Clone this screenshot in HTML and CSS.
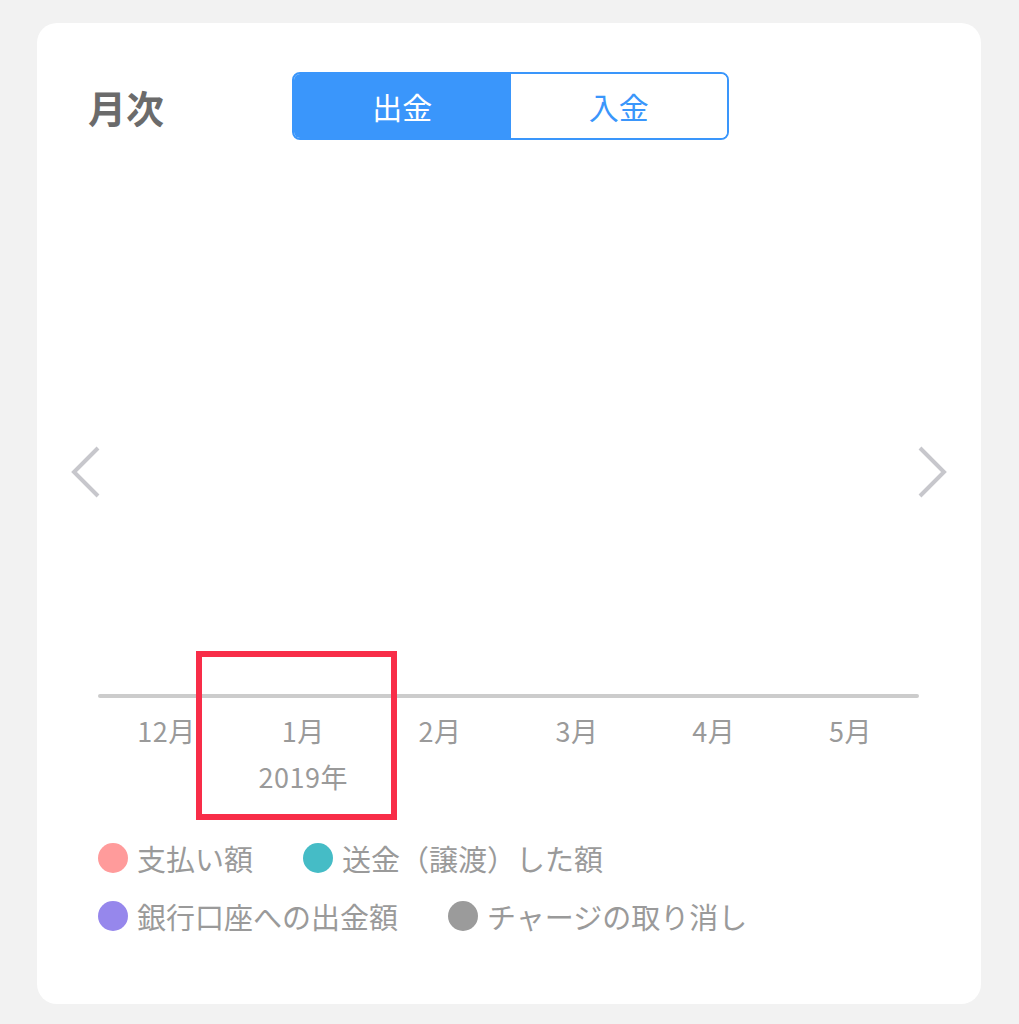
FILE: index.html
```html
<!DOCTYPE html>
<html lang="ja">
  <head>
    <meta charset="UTF-8" />
    <meta name="viewport" content="width=device-width, initial-scale=1.0" />
    <title>月次</title>
    <link rel="stylesheet" href="styles.css">
  </head>
  <body>
    <div class="card">
      <div class="header">
        <h1 class="title">月次</h1>
        <div class="segment">
          <button class="segment-btn active">出金</button>
          <button class="segment-btn">入金</button>
        </div>
      </div>

      <div class="chart">
        <button class="nav nav-prev" aria-label="前へ">
          <svg width="32" height="54" viewBox="0 0 32 54"><polyline points="28,3 4,27 28,51" fill="none" stroke="#c7c7cc" stroke-width="4" /></svg>
        </button>
        <div class="plot"></div>
        <button class="nav nav-next" aria-label="次へ">
          <svg width="32" height="54" viewBox="0 0 32 54"><polyline points="4,3 28,27 4,51" fill="none" stroke="#c7c7cc" stroke-width="4" /></svg>
        </button>
      </div>

      <div class="timeline">
        <div class="axis"></div>
        <div class="months">
          <div class="month">12月</div>
          <div class="month">1月<br />2019年</div>
          <div class="month">2月</div>
          <div class="month">3月</div>
          <div class="month">4月</div>
          <div class="month">5月</div>
        </div>
        <div class="selected"></div>
      </div>

      <ul class="legend">
        <li class="legend-item"><span class="dot pay"></span>支払い額</li>
        <li class="legend-item"><span class="dot send"></span>送金（譲渡）した額</li>
        <li class="legend-item"><span class="dot bank"></span>銀行口座への出金額</li>
        <li class="legend-item"><span class="dot cancel"></span>チャージの取り消し</li>
      </ul>
    </div>
  </body>
</html>
```

FILE: styles.css
```css
body {
  margin: 0;
  background-color: #f2f2f2;
  font-family: "Noto Sans CJK JP", "Noto Sans", sans-serif;
}

.card {
  background-color: #fff;
  width: 944px;
  height: 981px;
  margin: 23px 0 0 37px;
  border-radius: 20px;
  padding-top: 49px;
  box-sizing: border-box;
  position: relative;
}

.header {
  display: flex;
  align-items: center;
  height: 68px;
  padding-left: 51px;
}

.title {
  width: 204px;
  margin: 0;
  font-size: 38px;
  font-weight: bold;
  color: #6b6b6b;
  line-height: 1;
  padding-top: 2px;
}

.segment {
  display: flex;
  width: 437px;
  height: 68px;
  border: 2px solid #3a96fb;
  border-radius: 8px;
  box-sizing: border-box;
  overflow: hidden;
}

.segment-btn {
  flex: 1;
  border: none;
  background-color: #fff;
  color: #3a96fb;
  font-family: inherit;
  font-size: 30px;
  padding: 0;
  cursor: pointer;
}

.segment-btn.active {
  background-color: #3a96fb;
  color: #fff;
}

.chart {
  position: relative;
  height: 554px;
  padding: 0 62px 0 61px;
}

.plot {
  height: 100%;
}

.nav {
  position: absolute;
  top: 305px;
  border: none;
  background: none;
  padding: 0;
  width: 32px;
  height: 54px;
  cursor: pointer;
}

.nav svg {
  display: block;
}

.nav-prev {
  left: 33px;
}

.nav-next {
  left: 879px;
}

.timeline {
  position: relative;
  margin: 0 62px 0 61px;
}

.axis {
  height: 4px;
  background-color: #cccccc;
  border-radius: 2px;
}

.months {
  display: grid;
  grid-template-columns: repeat(6, 1fr);
  padding-top: 10px;
}

.month {
  text-align: center;
  font-size: 27px;
  line-height: 46px;
  letter-spacing: 0.5px;
  color: #9a9a9a;
}

.selected {
  position: absolute;
  left: 98px;
  top: -43px;
  width: 201px;
  height: 169px;
  border: 6px solid #f82d48;
  box-sizing: border-box;
}

.legend {
  list-style: none;
  margin: 29px 0 0;
  padding: 0 0 0 61px;
  display: flex;
  flex-wrap: wrap;
  column-gap: 50px;
  width: 700px;
}

.legend-item {
  display: flex;
  align-items: center;
  gap: 9px;
  height: 58px;
  font-size: 29px;
  color: #9a9a9a;
}

.dot {
  width: 30px;
  height: 30px;
  border-radius: 50%;
  display: inline-block;
}

.dot.pay {
  background-color: #ff9b9b;
}

.dot.send {
  background-color: #45bcc6;
}

.dot.bank {
  background-color: #9687ec;
}

.dot.cancel {
  background-color: #9b9b9b;
}
```
